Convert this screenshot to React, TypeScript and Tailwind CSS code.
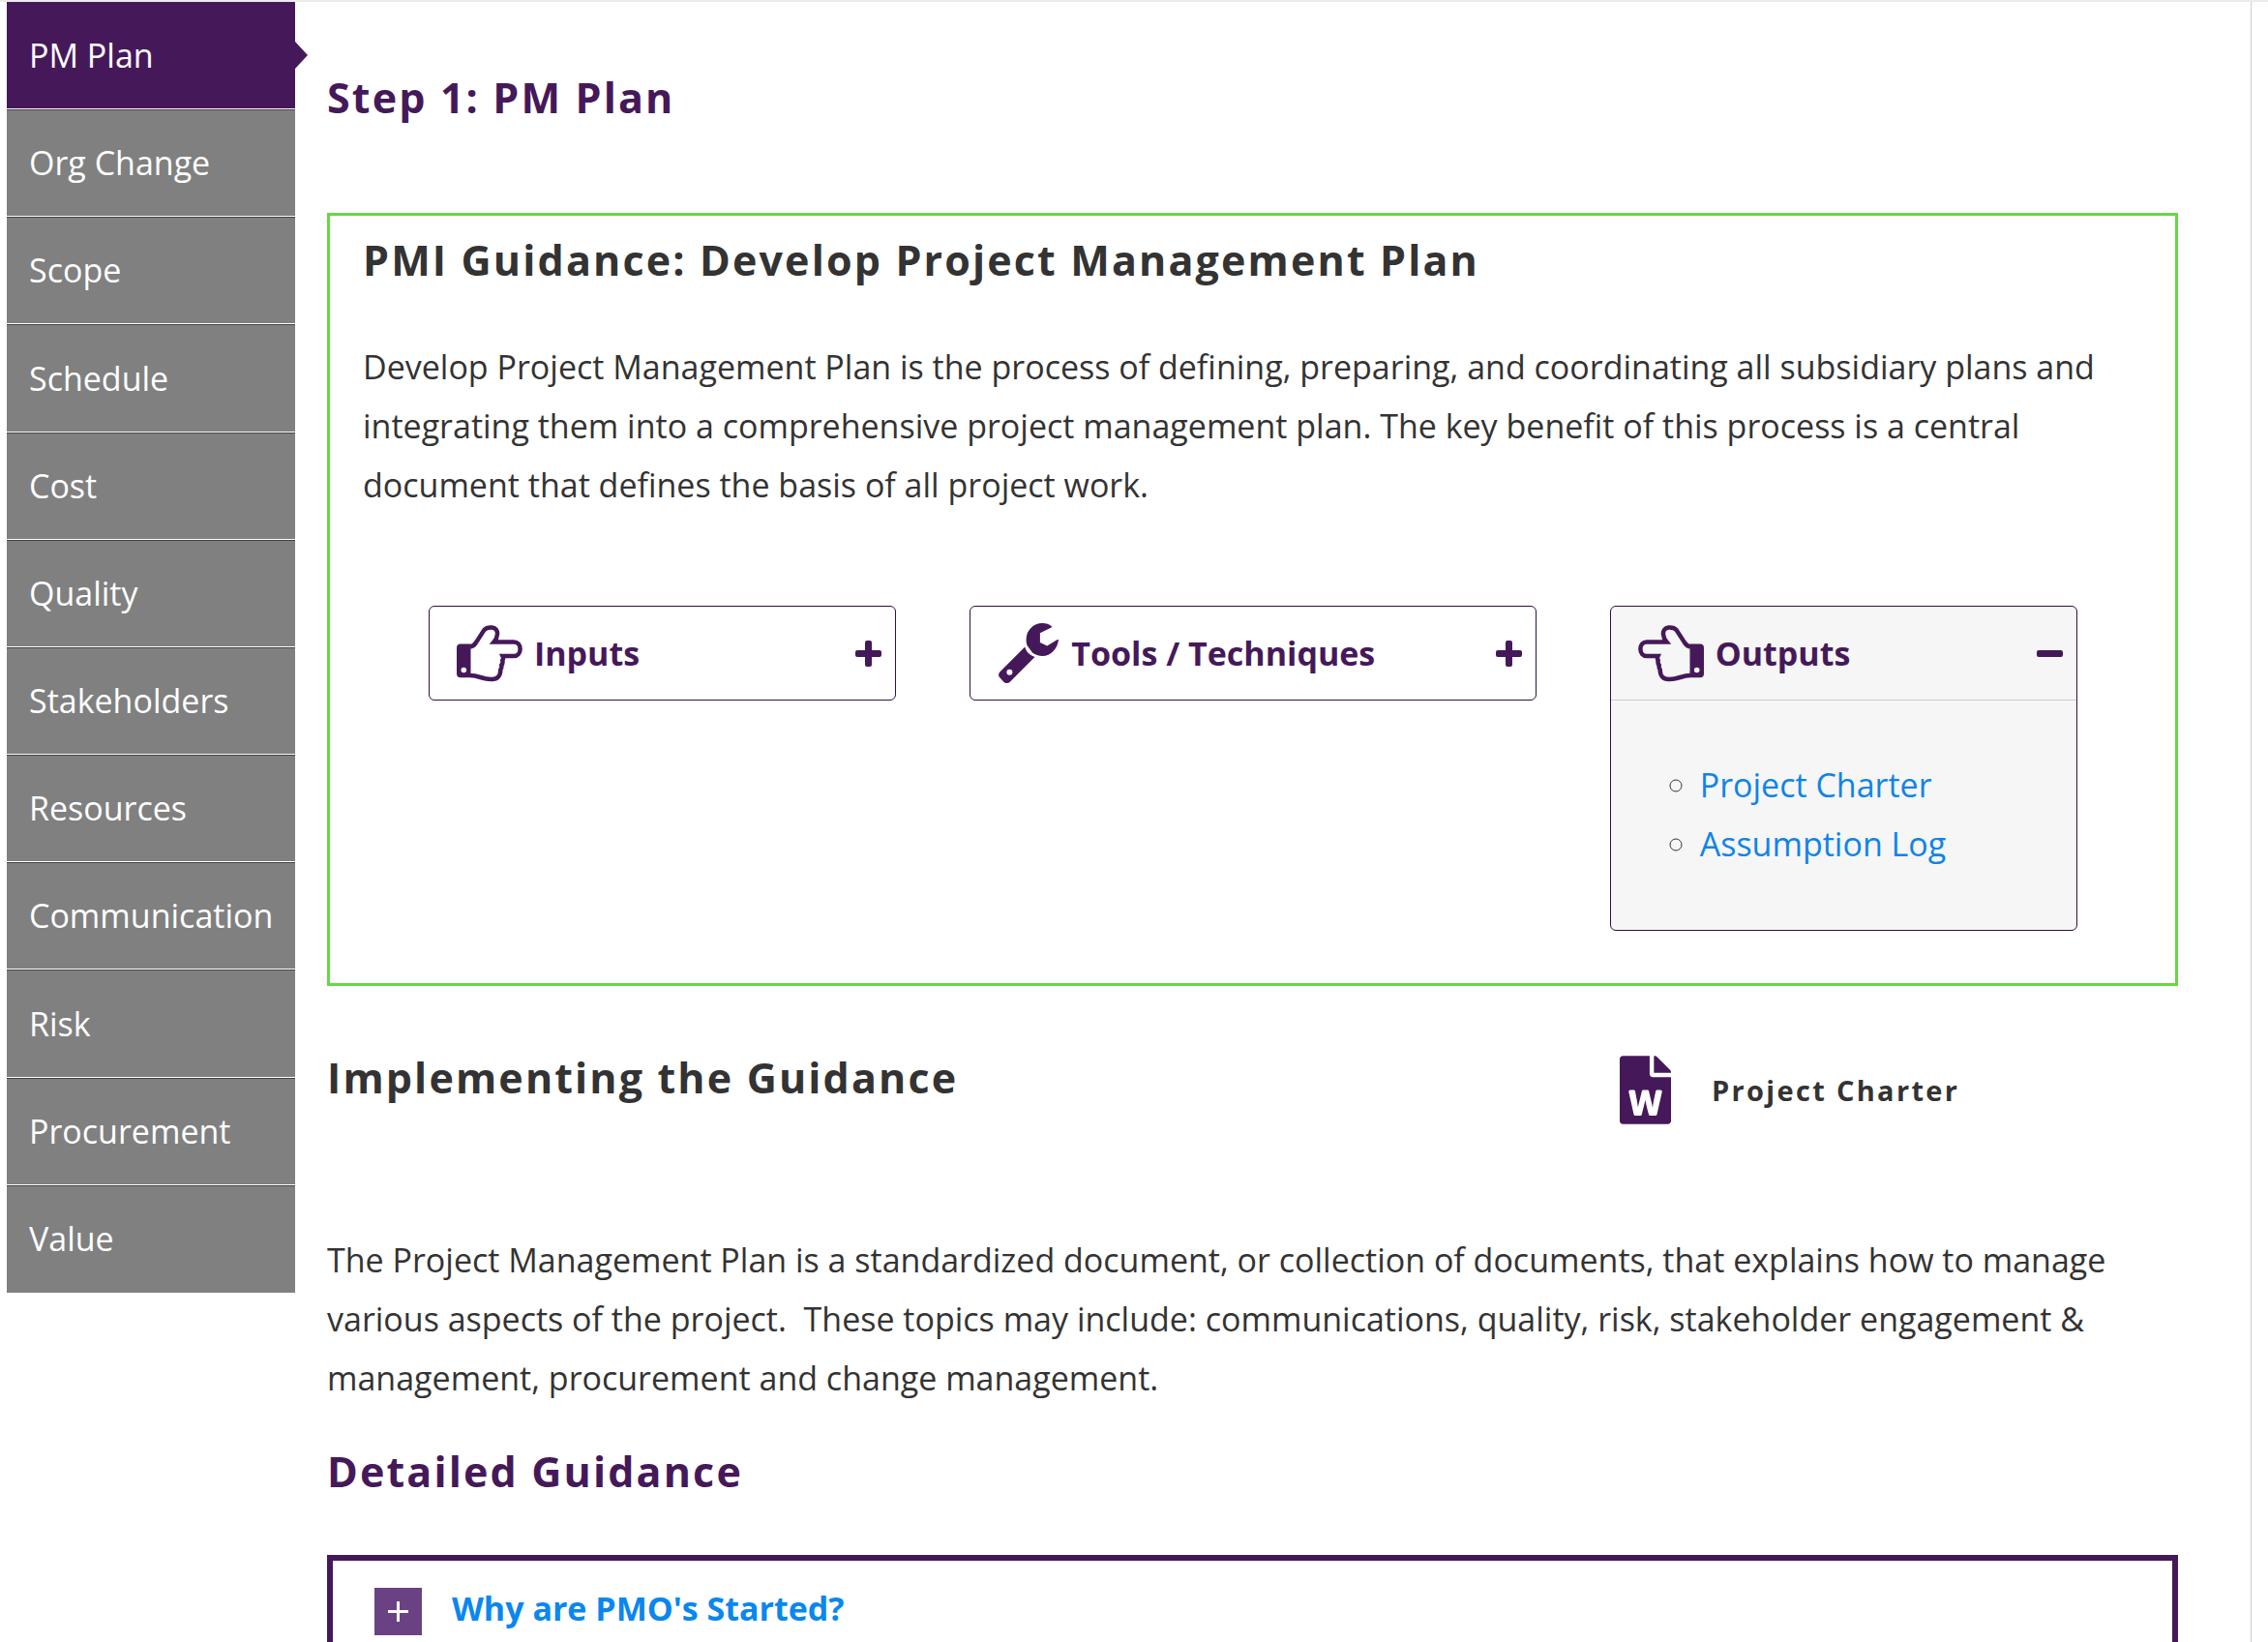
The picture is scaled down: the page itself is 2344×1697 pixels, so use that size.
import { useState } from "react";
import type { ReactNode } from "react";
import { FaFileWord } from "react-icons/fa";

const steps = [
  "PM Plan",
  "Org Change",
  "Scope",
  "Schedule",
  "Cost",
  "Quality",
  "Stakeholders",
  "Resources",
  "Communication",
  "Risk",
  "Procurement",
  "Value",
];

const outputs = ["Project Charter", "Assumption Log"];

// drawn pointing left, mirrored for the right-pointing version
function HandIcon({ direction }: { direction: "left" | "right" }) {
  return (
    <svg width="68" height="59" viewBox="0 0 68 59" aria-hidden="true">
      <g transform={direction === "right" ? "translate(68 0) scale(-1 1)" : undefined}>
        <path
          d="M54 22.500c-2.500-.5-4.500-2-6-4.500C44.500 13 42 8.500 39.500 5 37.800 2.900 35 2.300 31.500 2.500 27.500 3 25.700 6 26 9.500c.2 2.800 1.300 5.400 3.500 8H9C5 17.500 2.400 20.500 2.400 24.700S5 32 9 32h11.500c-.8 1.700-.8 3 .2 4.500-.5 2-.2 3.500 1 5-.3 2 0 3.400 1 4.700C22.700 52.500 26 56 31.500 56c4.500.2 8-.7 12-2 3.500-1.200 7-2 10.500-2"
          fill="none"
          stroke="currentColor"
          strokeWidth="4.500"
          strokeLinejoin="miter"
        />
        <path
          fill="currentColor"
          fillRule="evenodd"
          d="M53.500 19.500H64a4 4 0 0 1 4 4v26.700a4 4 0 0 1-4 4H53.500zM60.700 43.700a2.800 2.800 0 1 0 0 5.600 2.800 2.800 0 0 0 0-5.600z"
        />
      </g>
    </svg>
  );
}

function WrenchIcon() {
  return (
    <svg width="64" height="62" viewBox="-1 0 64 62" fill="currentColor" aria-hidden="true">
      <path d="M55 3.4C52 1 49 0 45.5 0 36 0 28.600 7.500 28.600 17c0 2.500.4 4.600 1.200 6.600L35 30.500c3 2.300 6.500 3.500 10.300 3.500 4.500 0 8.200-1.700 11-4.700 3.200-3 5.100-7.200 5.700-11.700-.6-.7-1.300-.6-2 0l-9.800 6-7.300-3.600v-9.700L54.600 4.500c.6-.3.8-.7.400-1.100z" />
      <path
        fillRule="evenodd"
        d="M27.300 24.600 1.300 50.600c-1.400 1.600-1.500 3.400-.7 5l5 5.400c2 1.500 4.300 1.300 6.200-.3l25.700-25.700c-3-1-5.500-2.400-7.300-4.700-1.500-1.700-2.400-3.500-2.900-5.700zM11.400 47.700a3 3 0 1 1 0 6 3 3 0 0 1 0-6z"
      />
    </svg>
  );
}

function ToggleIcon({ open }: { open: boolean }) {
  return (
    <svg width="27" height="27" viewBox="0 0 27 27" fill="currentColor" aria-hidden="true">
      <rect x="0" y="10" width="27" height="7" rx="2" />
      {!open && <rect x="10" y="0" width="7" height="27" rx="2" />}
    </svg>
  );
}

type CardProps = {
  title: string;
  icon: ReactNode;
  defaultOpen?: boolean;
  children?: ReactNode;
};

function Card({ title, icon, defaultOpen = false, children }: CardProps) {
  const [open, setOpen] = useState(defaultOpen);

  return (
    <div className={`rounded-md border border-[#2f1140] ${open ? "bg-[#f6f6f6]" : "bg-white"}`}>
      <button
        type="button"
        aria-expanded={open}
        onClick={() => setOpen(!open)}
        className="flex h-24 w-full items-center gap-3 pr-3.5 pl-7 text-left text-[34px] font-bold text-[#451959]"
      >
        {icon}
        <span className="flex-1">{title}</span>
        <ToggleIcon open={open} />
      </button>
      {open && <div className="border-t border-[#cccccc] px-7 pt-[57px] pb-[58px]">{children}</div>}
    </div>
  );
}

function Sidebar() {
  const [active, setActive] = useState("PM Plan");

  return (
    <nav className="w-[298px] shrink-0">
      <ul className="grid h-[1334px] auto-rows-fr">
        {steps.map((step) => (
          <li key={step} className="border-b border-white last:border-b-0">
            <a
              href="#"
              onClick={() => setActive(step)}
              className={`relative flex h-full items-center border-t pr-4 pl-[23px] text-[34px] text-white ${
                step === active ? "border-[#451959] bg-[#451959]" : "border-[#444444] bg-[#808080]"
              }`}
            >
              {step}
              {step === active && (
                <svg
                  className="absolute top-10 left-full"
                  width="13"
                  height="28"
                  viewBox="0 0 13 28"
                  fill="#451959"
                  aria-hidden="true"
                >
                  <path d="M0 0 13 14 0 28z" />
                </svg>
              )}
            </a>
          </li>
        ))}
      </ul>
    </nav>
  );
}

export default function App() {
  return (
    <div className="min-h-screen border-t-2 border-[#ebebeb] bg-white pr-[17px] pl-[7px] font-['Open_Sans',sans-serif] text-[#333333]">
      <div className="flex min-h-[1695px] border-r border-[#cccccc]">
        <Sidebar />

        <main className="min-w-0 flex-1 pt-[69px] pr-[75px] pl-[33px]">
          <h2 className="text-[43px] leading-[60px] font-bold tracking-wider text-[#451959]">
            Step 1: PM Plan
          </h2>

          <section className="mt-[89px] border-3 border-[#66d845] px-[34px] pt-4 pb-[54px]">
            <h2 className="text-[43px] leading-[60px] font-bold tracking-wider">
              PMI Guidance: Develop Project Management Plan
            </h2>
            <p className="mt-[50px] text-[34px] leading-[61px]">
              Develop Project Management Plan is the process of defining, preparing, and coordinating
              all subsidiary plans and integrating them into a comprehensive project management plan.
              The key benefit of this process is a central document that defines the basis of all
              project work.
            </p>

            <div className="mt-[94px] grid grid-cols-[483fr_585fr_483fr] items-start gap-[76px] pr-[67px] pl-[68px]">
              <Card title="Inputs" icon={<HandIcon direction="right" />} />
              <Card title="Tools / Techniques" icon={<WrenchIcon />} />
              <Card title="Outputs" icon={<HandIcon direction="left" />} defaultOpen>
                <ul className="list-[circle] pl-16 text-[34px] leading-[61px]">
                  {outputs.map((name) => (
                    <li key={name}>
                      <a href="#" className="text-[#0f84e8]">
                        {name}
                      </a>
                    </li>
                  ))}
                </ul>
              </Card>
            </div>
          </section>

          <div className="mt-[65px] grid grid-cols-[1336fr_577fr] items-start">
            <h2 className="text-[43px] leading-[60px] font-bold tracking-wider">
              Implementing the Guidance
            </h2>
            <a href="#" className="flex items-center gap-[42px] pt-[7px]">
              <FaFileWord className="h-[71px] w-[53px] text-[#451959]" />
              <span className="text-[29px] font-bold tracking-[0.08em]">Project Charter</span>
            </a>
          </div>

          <p className="mt-[110px] text-[34px] leading-[61px]">
            The Project Management Plan is a standardized document, or collection of documents, that
            explains how to manage various aspects of the project.&nbsp; These topics may include:
            communications, quality, risk, stakeholder engagement &amp; management, procurement and
            change management.
          </p>

          <h2 className="mt-9 text-[43px] leading-[60px] font-bold tracking-wider text-[#451959]">
            Detailed Guidance
          </h2>

          <section className="mt-14 border-6 border-b-0 border-[#451959] px-[43px] pt-7 pb-[7px]">
            <div className="flex items-start gap-[31px]">
              <button
                type="button"
                aria-label="Expand Why are PMO's Started?"
                className="flex size-[49px] items-center justify-center bg-[#6a4283] text-white"
              >
                <svg width="21" height="21" viewBox="0 0 21 21" fill="currentColor" aria-hidden="true">
                  <path d="M9 0h3v9h9v3h-9v9H9v-9H0V9h9z" />
                </svg>
              </button>
              <a href="#" className="text-[34px] leading-[42px] font-bold text-[#0a87ee]">
                Why are PMO's Started?
              </a>
            </div>
          </section>
        </main>
      </div>
    </div>
  );
}
